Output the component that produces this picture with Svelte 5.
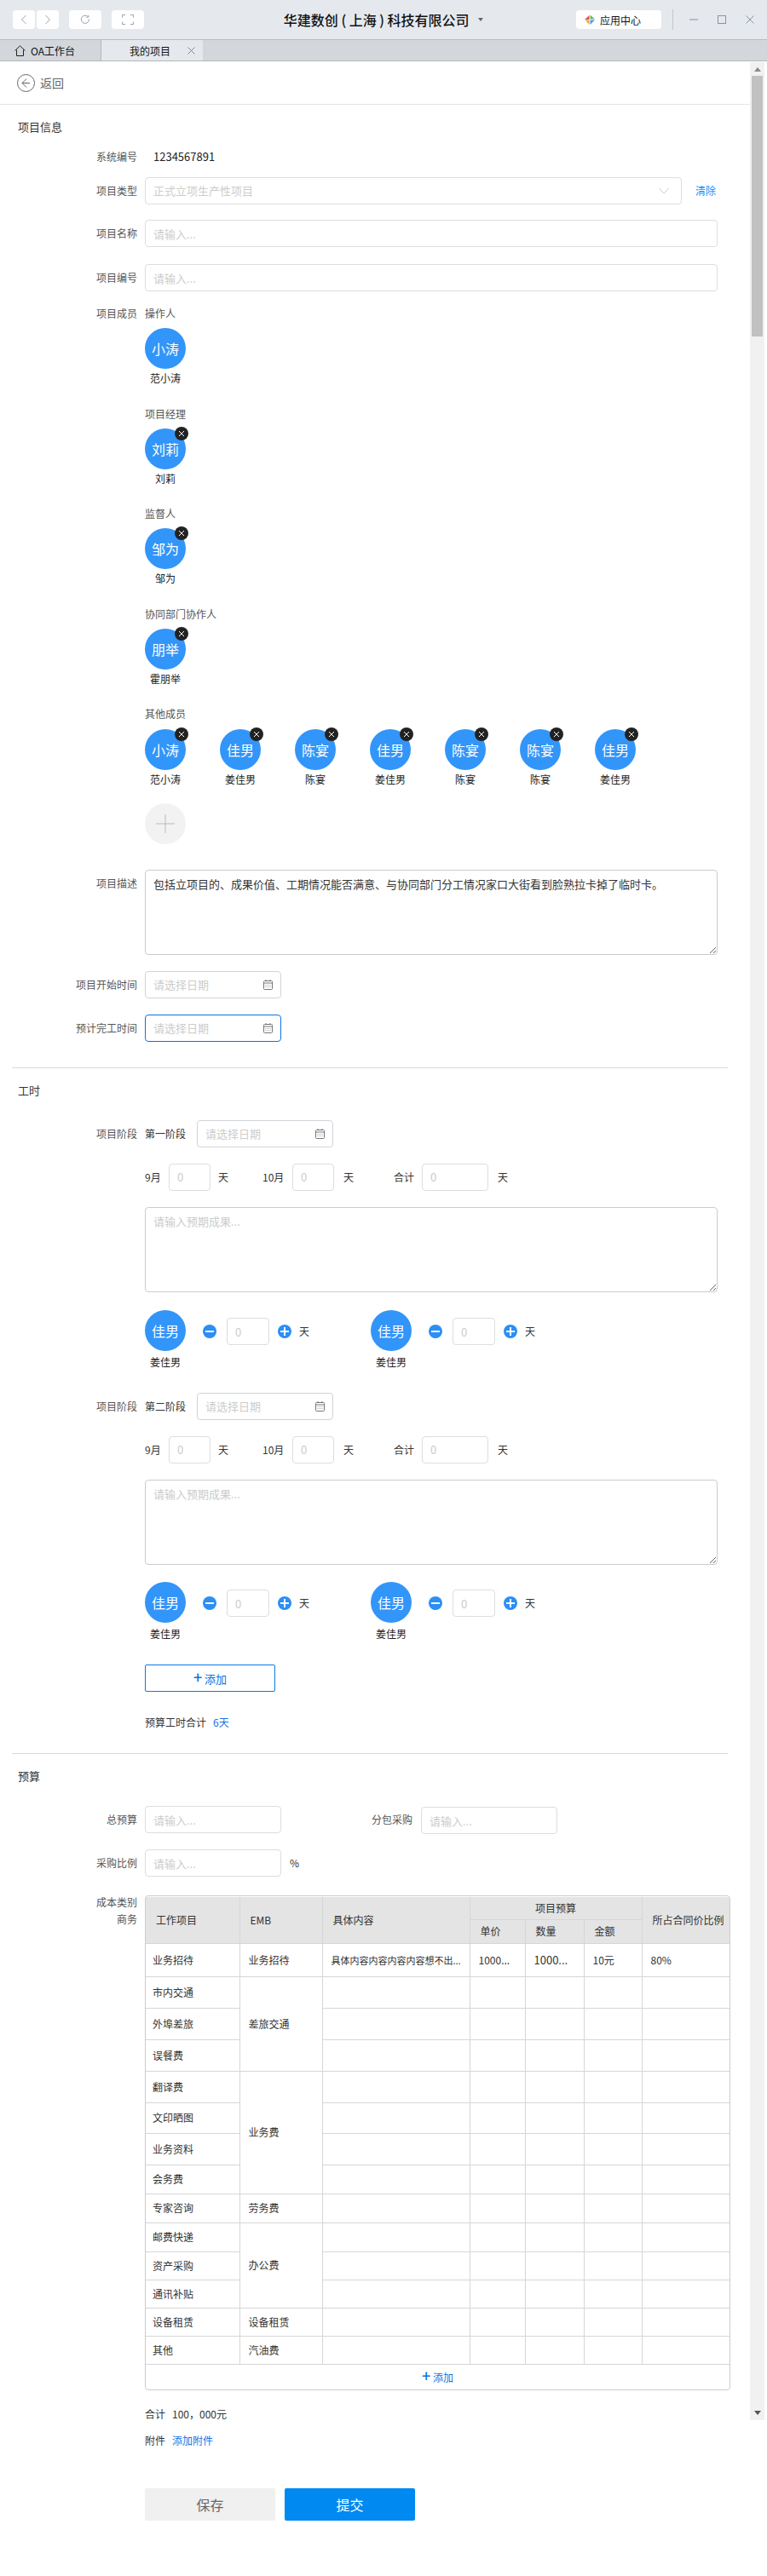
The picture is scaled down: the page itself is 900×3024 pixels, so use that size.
<script>
  const others = [
    { short: '小涛', name: '范小涛' },
    { short: '佳男', name: '姜佳男' },
    { short: '陈宴', name: '陈宴' },
    { short: '佳男', name: '姜佳男' },
    { short: '陈宴', name: '陈宴' },
    { short: '陈宴', name: '陈宴' },
    { short: '佳男', name: '姜佳男' }
  ];

  const singles = [
    { title: '操作人', short: '小涛', name: '范小涛', removable: false },
    { title: '项目经理', short: '刘莉', name: '刘莉', removable: true },
    { title: '监督人', short: '邹为', name: '邹为', removable: true },
    { title: '协同部门协作人', short: '朋举', name: '霍朋举', removable: true }
  ];

  const stages = ['第一阶段', '第二阶段'];

  const rows = [
    { h: 39, a: '业务招待', b: '业务招待', span: 1, filled: true },
    { h: 37, a: '市内交通', b: '差旅交通', span: 3 },
    { h: 37, a: '外埠差旅' },
    { h: 37, a: '误餐费' },
    { h: 37, a: '翻译费', b: '业务费', span: 4 },
    { h: 36, a: '文印晒图' },
    { h: 37, a: '业务资料' },
    { h: 34, a: '会务费' },
    { h: 34, a: '专家咨询', b: '劳务费', span: 1 },
    { h: 34, a: '邮费快递', b: '办公费', span: 3 },
    { h: 33, a: '资产采购' },
    { h: 33, a: '通讯补贴' },
    { h: 33, a: '设备租赁', b: '设备租赁', span: 1 },
    { h: 33, a: '其他', b: '汽油费', span: 1 }
  ];
</script>

{#snippet person(short, name, removable)}
  <div class="person">
    <div class="avatar">
      {short}
      {#if removable}
        <span class="badge">
          <svg width="8" height="8" viewBox="0 0 8 8"><path d="M1 1l6 6M7 1L1 7" stroke="#fff" stroke-width="1" /></svg>
        </span>
      {/if}
    </div>
    <div class="person-name">{name}</div>
  </div>
{/snippet}

{#snippet dateBox(focused)}
  <div class="date-box" class:focused>
    <input placeholder="请选择日期" />
    <svg width="11" height="12" viewBox="0 0 11 12" fill="none" stroke="#777">
      <rect x=".5" y="1.500" width="10" height="10" rx="1" />
      <path d="M.5 4h10M3 0v2M8 0v2" />
      <path d="M2.500 6.500h1M5 6.500h1M7.500 6.500h1M2.500 8.500h1M5 8.500h1M7.500 8.500h1" stroke="#999" />
    </svg>
  </div>
{/snippet}

{#snippet roundBtn(plus)}
  <svg class="round" width="16" height="16" viewBox="0 0 16 16">
    <circle cx="8" cy="8" r="8" fill="#2b8ff5" />
    <path d={plus ? 'M3 8h10M8 3v10' : 'M3 8h10'} stroke="#fff" stroke-width="2" />
  </svg>
{/snippet}

<div class="titlebar">
  <div class="nav">
    <div class="pair">
      <button class="tool narrow" aria-label="后退">
        <svg width="8" height="12" viewBox="0 0 8 12" fill="none" stroke="#9aa3ad"><path d="M6.500 1L1.500 6l5 5" /></svg>
      </button>
      <button class="tool narrow" aria-label="前进">
        <svg width="8" height="12" viewBox="0 0 8 12" fill="none" stroke="#9aa3ad"><path d="M1.500 1l5 5-5 5" /></svg>
      </button>
    </div>
    <button class="tool wide" aria-label="刷新">
      <svg width="12" height="12" viewBox="0 0 12 12" fill="none" stroke="#9aa3ad"><path d="M10.500 5.500a4.600 4.600 0 1 1-1.600-3.200" /><path d="M9.800 .8v2.400H7.400" /></svg>
    </button>
    <button class="tool wide" aria-label="全屏">
      <svg width="14" height="12" viewBox="0 0 14 12" fill="none" stroke="#9aa3ad"><path d="M4 .5H.5v3M10 .5h3.500v3M4 11.500H.5v-3M10 11.500h3.500v-3" /></svg>
    </button>
  </div>
  <div class="company">
    华建数创 ( 上海 ) 科技有限公司
    <span class="caret"></span>
  </div>
  <div class="win">
    <div class="apps">
      <svg width="12" height="12" viewBox="0 0 12 12">
        <path d="M0 6l5.500-5v5z" fill="#e5504b" />
        <path d="M6.500 .5L12 5.500H6.500z" fill="#5dbb63" />
        <path d="M12 6.500L6.500 12V6.500z" fill="#4a9cf0" />
        <path d="M5.500 12L.5 6.500h5z" fill="#f3a648" />
      </svg>
      应用中心
    </div>
    <span class="sep"></span>
    <svg class="w-btn" width="10" height="10" viewBox="0 0 10 10"><path d="M0 5h10" stroke="#8a949e" /></svg>
    <svg class="w-btn" width="10" height="10" viewBox="0 0 10 10" fill="none"><rect x=".5" y=".5" width="9" height="9" stroke="#8a949e" /></svg>
    <svg class="w-btn" width="10" height="10" viewBox="0 0 10 10"><path d="M.5 .5l9 9M9.500 .5l-9 9" stroke="#8a949e" /></svg>
  </div>
</div>

<div class="tabs">
  <div class="tab home">
    <svg width="13" height="13" viewBox="0 0 13 13" fill="none" stroke="#222"><path d="M.5 6.500L6.500 .8l6 5.700M2.500 5.500v7h8v-7" /></svg>
    OA工作台
  </div>
  <div class="tab current">
    我的项目
    <svg width="9" height="9" viewBox="0 0 9 9"><path d="M.5 .5l8 8M8.500 .5l-8 8" stroke="#7f8a94" /></svg>
  </div>
</div>

<div class="page">
  <main class="content">
    <div class="back">
      <svg width="21" height="21" viewBox="0 0 21 21" fill="none" stroke="#666"><circle cx="10.500" cy="10.500" r="10" /><path d="M11 5.500l-5 5 5 5M6 10.500h9" /></svg>
      返回
    </div>

    <h3 class="sec">项目信息</h3>

    <div class="row text-row sys">
      <span class="label">系统编号</span>
      <span class="sys-no">1234567891</span>
    </div>
    <div class="row gap14">
      <span class="label mid">项目类型</span>
      <div class="box select">
        <span class="ph">正式立项生产性项目</span>
        <svg width="12" height="8" viewBox="0 0 12 8" fill="none" stroke="#ccc"><path d="M.5 1L6 7l5.500-6" /></svg>
      </div>
      <span class="clear">清除</span>
    </div>
    <div class="row gap18">
      <span class="label mid">项目名称</span>
      <input class="box full" placeholder="请输入..." />
    </div>
    <div class="row gap20">
      <span class="label mid">项目编号</span>
      <input class="box full" placeholder="请输入..." />
    </div>

    <div class="row members">
      <span class="label">项目成员</span>
      <div class="groups">
        {#each singles as g}
          <div class="group">
            <div class="group-title">{g.title}</div>
            {@render person(g.short, g.name, g.removable)}
          </div>
        {/each}
        <div class="group last">
          <div class="group-title">其他成员</div>
          <div class="people">
            {#each others as p}
              {@render person(p.short, p.name, true)}
            {/each}
          </div>
        </div>
        <div class="add-person">
          <svg width="22" height="22" viewBox="0 0 22 22"><path d="M0 11h22M11 0v22" stroke="#bbb" /></svg>
        </div>
      </div>
    </div>

    <div class="row gap30">
      <span class="label top6">项目描述</span>
      <textarea class="box area">包括立项目的、成果价值、工期情况能否满意、与协同部门分工情况家口大街看到脸熟拉卡掉了临时卡。</textarea>
    </div>
    <div class="row gap19">
      <span class="label mid">项目开始时间</span>
      {@render dateBox(false)}
    </div>
    <div class="row gap19">
      <span class="label mid">预计完工时间</span>
      {@render dateBox(true)}
    </div>

    <hr class="rule" />
    <h3 class="sec">工时</h3>

    {#each stages as stage, i}
      <div class="row" class:stage-first={i === 0} class:stage-next={i > 0}>
        <span class="label mid">项目阶段</span>
        <span class="stage-name">{stage}</span>
        {@render dateBox(false)}
      </div>
      <div class="row gap19 indent months">
        <span class="m1">9月</span>
        <input class="box num" placeholder="0" />
        <span class="day">天</span>
        <span class="m2">10月</span>
        <input class="box num" placeholder="0" />
        <span class="day wide-day">天</span>
        <span class="m3">合计</span>
        <input class="box num total" placeholder="0" />
        <span class="day wide-day">天</span>
      </div>
      <div class="row gap19 indent">
        <textarea class="box area" placeholder="请输入预期成果..."></textarea>
      </div>
      <div class="row indent" class:alloc-first={i === 0} class:alloc-next={i > 0}>
        {#each [0, 1] as _}
          <div class="alloc">
            {@render person('佳男', '姜佳男', false)}
            <div class="stepper">
              {@render roundBtn(false)}
              <input class="box num step" placeholder="0" />
              {@render roundBtn(true)}
              <span class="day">天</span>
            </div>
          </div>
        {/each}
      </div>
    {/each}

    <div class="row indent gap26">
      <button class="add-btn"><span class="plus">+</span> 添加</button>
    </div>
    <div class="row indent text-row gap26">
      <span>预算工时合计</span>
      <span class="blue sum">6天</span>
    </div>

    <hr class="rule low" />
    <h3 class="sec">预算</h3>

    <div class="row budget">
      <span class="label mid">总预算</span>
      <input class="box date-w" placeholder="请输入..." />
      <span class="label mid sub">分包采购</span>
      <input class="box date-w sub-input" placeholder="请输入..." />
    </div>
    <div class="row gap18">
      <span class="label mid">采购比例</span>
      <input class="box date-w" placeholder="请输入..." />
      <span class="pct">%</span>
    </div>

    <div class="row cost">
      <div class="label stack">
        <span>成本类别</span>
        <span>商务</span>
      </div>
      <div class="table-wrap">
        <table>
          <colgroup>
            <col class="c1" /><col class="c2" /><col class="c3" /><col class="c4" /><col class="c5" /><col class="c6" /><col />
          </colgroup>
          <thead>
            <tr class="h1">
              <th rowspan="2">工作项目</th>
              <th rowspan="2">EMB</th>
              <th rowspan="2">具体内容</th>
              <th colspan="3" class="center">项目预算</th>
              <th rowspan="2">所占合同价比例</th>
            </tr>
            <tr class="h2">
              <th>单价</th>
              <th>数量</th>
              <th>金额</th>
            </tr>
          </thead>
          <tbody>
            {#each rows as r}
              <tr style:height="{r.h}px">
                <td>{r.a}</td>
                {#if r.b}
                  <td rowspan={r.span}>{r.b}</td>
                {/if}
                {#if r.filled}
                  <td class="small">具体内容内容内容内容想不出...</td>
                  <td>1000...</td>
                  <td class="big">1000...</td>
                  <td>10元</td>
                  <td>80%</td>
                {:else}
                  <td></td><td></td><td></td><td></td><td></td>
                {/if}
              </tr>
            {/each}
          </tbody>
        </table>
        <div class="table-add"><span class="plus">+</span> 添加</div>
      </div>
    </div>

    <div class="row indent text-row gap18">
      <span>合计</span>
      <span class="total-sum">100，000元</span>
    </div>
    <div class="row indent text-row gap11">
      <span>附件</span>
      <span class="blue attach">添加附件</span>
    </div>
    <div class="row indent actions">
      <button class="save">保存</button>
      <button class="submit">提交</button>
    </div>
  </main>

  <div class="scrollbar">
    <span class="arrow up"></span>
    <div class="thumb"></div>
    <span class="spacer"></span>
    <span class="arrow down"></span>
  </div>
</div>

<style>
  :global(body) {
    font-family: "Noto Sans CJK SC", "Liberation Sans", sans-serif;
    font-size: 12px;
    color: #333;
    background: #fff;
  }

  .titlebar {
    display: grid;
    grid-template-columns: 1fr auto 1fr;
    align-items: center;
    height: 46px;
    padding: 0 15px;
    background: #e5e9ee;
    border-bottom: 1px solid #b9bcbf;
  }

  .nav {
    display: flex;
    gap: 12px;
  }

  .pair {
    display: flex;
    gap: 2px;
  }

  .tool {
    display: flex;
    align-items: center;
    justify-content: center;
    height: 22px;
    padding: 0;
    background: #fff;
    border: 0;
    border-radius: 4px;
  }

  .narrow {
    width: 26px;
  }

  .wide {
    width: 38px;
  }

  .company {
    display: flex;
    align-items: center;
    gap: 7px;
    font-size: 16px;
    font-weight: 500;
    color: #111;
    white-space: pre;
  }

  .caret {
    width: 0;
    height: 0;
    border: 3px solid transparent;
    border-top: 4px solid #666;
    border-bottom: 0;
  }

  .win {
    display: flex;
    align-items: center;
    justify-content: flex-end;
  }

  .apps {
    display: flex;
    align-items: center;
    gap: 6px;
    width: 100px;
    height: 22px;
    padding-left: 10px;
    box-sizing: border-box;
    margin-right: 13px;
    background: #fff;
    border-radius: 4px;
    color: #111;
  }

  .sep {
    width: 1px;
    height: 24px;
    margin-right: 19px;
    background: #c4c8cc;
  }

  .w-btn + .w-btn {
    margin-left: 23px;
  }

  .tabs {
    display: flex;
    height: 24px;
    background: #d3d7dc;
    border-bottom: 1px solid #b4b6b8;
    color: #111;
  }

  .tab {
    display: flex;
    align-items: center;
    box-sizing: border-box;
  }

  .home {
    gap: 6px;
    width: 119px;
    padding-left: 17px;
    border-right: 1px solid #b4b6b8;
  }

  .current {
    width: 119px;
    padding-left: 33px;
    gap: 20px;
    background: #e5e9ee;
  }

  .page {
    display: flex;
    height: 2952px;
  }

  .content {
    width: 880px;
    flex: none;
  }

  .scrollbar {
    display: flex;
    flex-direction: column;
    align-items: center;
    width: 17px;
    height: 2768px;
    margin-top: 1px;
    background: #f1f1f1;
  }

  .thumb {
    width: 13px;
    height: 306px;
    flex: none;
    background: #c1c1c1;
  }

  .spacer {
    flex: 1;
  }

  .arrow {
    width: 0;
    height: 0;
    margin: 6px 0 5px;
    border: 4px solid transparent;
    border-top: 0;
    border-bottom: 5px solid #888;
  }

  .arrow.down {
    margin: 6px 0;
    border-bottom: 0;
    border-top: 5px solid #555;
  }

  .back {
    display: flex;
    align-items: center;
    gap: 6px;
    height: 50px;
    padding-left: 20px;
    border-bottom: 1px solid #e5e5e5;
    font-size: 14px;
    color: #666;
  }

  .sec {
    margin: 16px 0 0 21px;
    font-size: 13px;
    font-weight: 400;
    line-height: 20px;
    color: #333;
  }

  .rule {
    width: 840px;
    height: 1px;
    margin: 30px 0 0 14px;
    border: 0;
    background: #d9d9d9;
  }

  .rule.low {
    margin-top: 26px;
  }

  .row {
    display: flex;
    align-items: flex-start;
    line-height: 20px;
  }

  .indent {
    padding-left: 170px;
  }

  .text-row {
    height: 20px;
  }

  .sys {
    margin-top: 15px;
  }

  .gap11 { margin-top: 11px; }
  .gap14 { margin-top: 14px; }
  .gap18 { margin-top: 18px; }
  .gap19 { margin-top: 19px; }
  .gap20 { margin-top: 20px; }
  .gap26 { margin-top: 26px; }
  .gap30 { margin-top: 30px; }

  .label {
    flex: none;
    width: 161px;
    margin-right: 9px;
    text-align: right;
    color: #555;
  }

  .mid {
    line-height: 32px;
  }

  .top6 {
    margin-top: 6px;
  }

  .sys-no {
    margin-left: 10px;
    font-size: 13px;
    color: #222;
  }

  .box {
    box-sizing: border-box;
    height: 32px;
    padding: 0 9px;
    font: inherit;
    font-size: 13px;
    color: #333;
    background: #fff;
    border: 1px solid #ddd;
    border-radius: 4px;
    outline: 0;
  }

  .box::placeholder,
  .date-box input::placeholder {
    color: #ccc;
    opacity: 1;
  }

  .select {
    display: flex;
    align-items: center;
    justify-content: space-between;
    width: 630px;
    padding-right: 14px;
  }

  .ph {
    color: #ccc;
  }

  .clear {
    margin-left: 16px;
    line-height: 32px;
    color: #1890ff;
  }

  .full {
    width: 672px;
  }

  .area {
    display: block;
    width: 672px;
    height: 100px;
    padding: 6px 9px;
    line-height: 20px;
    border-color: #ccc;
    resize: both;
  }

  .date-box {
    display: flex;
    align-items: center;
    box-sizing: border-box;
    width: 160px;
    height: 32px;
    padding: 0 9px;
    background: #fff;
    border: 1px solid #d0d4d8;
    border-radius: 4px;
  }

  .date-box.focused {
    border-color: #0a74e0;
  }

  .date-box input {
    flex: 1;
    min-width: 0;
    padding: 0;
    font: inherit;
    font-size: 13px;
    background: transparent;
    border: 0;
    outline: 0;
  }

  .members {
    margin-top: 16px;
  }

  .groups {
    display: flex;
    flex-direction: column;
  }

  .group {
    margin-bottom: 21.500px;
  }

  .group.last {
    margin-bottom: 18px;
  }

  .group-title {
    margin-bottom: 7px;
    color: #555;
  }

  .last .group-title {
    margin-bottom: 8px;
  }

  .people {
    display: flex;
    gap: 40px;
  }

  .person {
    width: 48px;
    flex: none;
  }

  .avatar {
    position: relative;
    width: 48px;
    height: 48px;
    font-size: 16px;
    line-height: 48px;
    text-align: center;
    color: #fff;
    background: #3295f9;
    border-radius: 50%;
  }

  .badge {
    position: absolute;
    top: -2px;
    right: -3px;
    display: flex;
    align-items: center;
    justify-content: center;
    width: 16px;
    height: 16px;
    background: #222;
    border-radius: 50%;
  }

  .person-name {
    margin-top: 1px;
    text-align: center;
    white-space: nowrap;
    color: #222;
  }

  .add-person {
    display: flex;
    align-items: center;
    justify-content: center;
    width: 48px;
    height: 48px;
    background: #f2f2f2;
    border-radius: 50%;
  }

  .stage-first {
    margin-top: 25px;
  }

  .stage-next {
    margin-top: 26px;
  }

  .stage-name {
    width: 50px;
    margin-right: 11px;
    line-height: 32px;
    color: #333;
  }

  .months {
    line-height: 32px;
  }

  .num {
    width: 49px;
  }

  .num.total {
    width: 78px;
  }

  .day {
    margin-left: 9px;
  }

  .wide-day {
    margin-left: 11px;
  }

  .m1 {
    width: 28px;
  }

  .m2 {
    width: 35px;
    margin-left: 40px;
  }

  .m3 {
    width: 33px;
    margin-left: 47px;
  }

  .alloc-first {
    margin-top: 21px;
  }

  .alloc-next {
    margin-top: 20px;
  }

  .alloc {
    display: flex;
    width: 265px;
  }

  .alloc .person-name {
    margin-top: 3px;
  }

  .stepper {
    display: flex;
    align-items: center;
    height: 48px;
    margin-left: 20px;
    margin-top: 1px;
  }

  .num.step {
    width: 50px;
    margin: 0 10px 0 12px;
  }

  .add-btn {
    width: 153px;
    height: 32px;
    padding: 0;
    font: inherit;
    font-size: 13px;
    color: #0a74e0;
    background: #fff;
    border: 1px solid #0a7be8;
    border-radius: 2px;
  }

  .plus {
    font-size: 18px;
    font-weight: 500;
    line-height: 1;
  }

  .blue {
    color: #1473e6;
  }

  .sum {
    margin-left: 8px;
  }

  .attach {
    margin-left: 8px;
  }

  .total-sum {
    margin-left: 8px;
  }

  .budget {
    margin-top: 25px;
  }

  .date-w {
    width: 160px;
  }

  .sub {
    width: 60px;
    margin-left: 94px;
    margin-right: 10px;
  }

  .sub-input {
    margin-top: 1px;
  }

  .pct {
    margin-left: 10px;
    line-height: 32px;
  }

  .cost {
    margin-top: 22px;
  }

  .stack {
    display: flex;
    flex-direction: column;
    margin-top: -2px;
  }

  .table-wrap {
    box-sizing: border-box;
    width: 687px;
    padding-top: 1px;
    border: 1px solid #ccc;
    border-radius: 4px;
  }

  table {
    width: 100%;
    border-collapse: collapse;
    table-layout: fixed;
  }

  .c1 { width: 110px; }
  .c2 { width: 97px; }
  .c3 { width: 173px; }
  .c4 { width: 65px; }
  .c5 { width: 69px; }
  .c6 { width: 68px; }

  th {
    padding: 0 0 0 12px;
    font-weight: 400;
    text-align: left;
    white-space: nowrap;
    background: #e4e4e4;
    border: 1px solid #d6d6d6;
    border-top: 0;
    color: #333;
  }

  th.center {
    padding: 0;
    text-align: center;
  }

  .h1 {
    height: 26px;
  }

  .h2 {
    height: 28px;
  }

  td {
    padding: 0 0 0 10px;
    border: 1px solid #d6d6d6;
    color: #333;
    white-space: nowrap;
    overflow: hidden;
  }

  td:first-child {
    padding-left: 8px;
  }

  th:first-child,
  td:first-child {
    border-left: 0;
  }

  th:last-child,
  td:last-child {
    border-right: 0;
  }

  .small {
    font-size: 11px;
  }

  .big {
    font-size: 13px;
  }

  .table-add {
    height: 29px;
    line-height: 29px;
    text-align: center;
    color: #0a74e0;
  }

  .actions {
    gap: 11px;
    margin-top: 46px;
  }

  .actions button {
    width: 153px;
    height: 38px;
    padding: 0;
    font: inherit;
    font-size: 16px;
    border: 0;
    border-radius: 2px;
  }

  .save {
    color: #666;
    background: #f0f0f0;
  }

  .submit {
    color: #fff;
    background: #0089f0;
  }
</style>
